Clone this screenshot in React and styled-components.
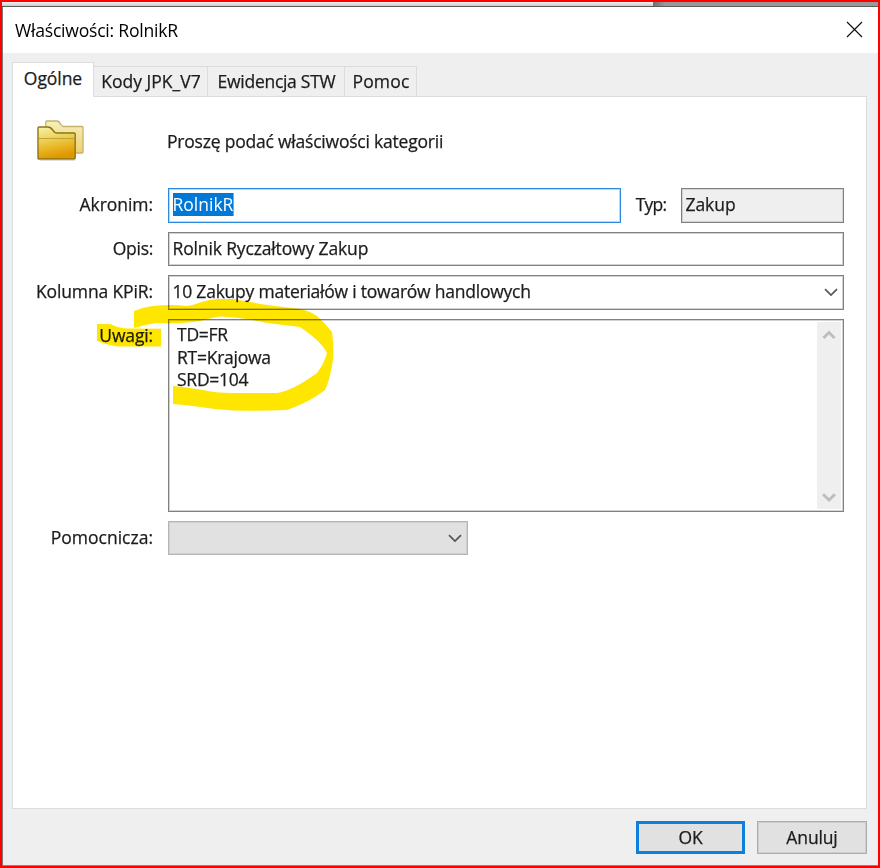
import React from "react";
import styled, { createGlobalStyle } from "styled-components";

const GlobalStyle = createGlobalStyle`
* {
box-sizing: border-box;
}
body {
margin: 0;
overflow: hidden;
font-family: "Open Sans", "Noto Sans", sans-serif;
font-stretch: 92%;
}
`

const Frame = styled.div`
width: 880px;
height: 868px;
border: 2px solid #ff0000;
background-color: #efefef;
position: relative;
display: flex;
flex-direction: column;
`

const Backdrop = styled.div`
height: 5px;
flex: none;
border-bottom: 1px solid #5c5c5c;
display: flex;
`

const BackdropPart = styled.div`
width: ${({ width }) => width || "auto"};
flex: ${({ width }) => width ? "none" : "1"};
background: ${({ bg }) => bg};
`

const DialogWindow = styled.div`
flex: 1;
display: flex;
flex-direction: column;
border-left: 1px solid #777;
border-bottom: 1px solid #888;
`

const TitleBar = styled.div`
height: 46px;
flex: none;
background-color: #fff;
display: flex;
align-items: center;
justify-content: space-between;
padding: 0 15px 0 12px;
`

const CloseBox = styled.div`
height: 19px;
display: flex;
align-items: flex-start;
`

const Txt = styled.span`
font-size: ${({ size }) => size || "17.5px"};
line-height: ${({ leading }) => leading || "23px"};
letter-spacing: ${({ spacing }) => spacing || "-0.14px"};
color: ${({ color }) => color || "#1c1c1c"};
-webkit-text-stroke: ${({ stroke }) => stroke || "0.25px"};
white-space: pre;
`

const TabBar = styled.div`
height: 43px;
flex: none;
display: flex;
align-items: flex-end;
padding-left: 9px;
`

const Tab = styled.div`
width: ${({ width }) => width};
height: ${({ active }) => active ? "35px" : "30px"};
margin-bottom: ${({ active }) => active ? "-1px" : "0"};
padding: ${({ active }) => active ? "0 0 4px" : "0 0 1px 1px"};
border: 1px solid #dcdcdc;
border-bottom: none;
border-left-width: ${({ active }) => active ? "1px" : "0"};
background-color: ${({ active }) => active ? "#fff" : "#efefef"};
position: relative;
z-index: ${({ active }) => active ? 1 : 0};
display: flex;
align-items: center;
justify-content: center;
`

const Panel = styled.div`
width: 855px;
height: 713px;
flex: none;
margin-left: 9px;
padding: 23px 22px 0 0;
border: 1px solid #dcdcdc;
background-color: #fff;
`

const Heading = styled.div`
height: 68px;
display: flex;
align-items: flex-start;
padding-left: 24px;
gap: 83px;
`

const HeadingText = styled.div`
padding-top: 10px;
`

const Row = styled.div`
display: grid;
grid-template-columns: 140px 1fr;
column-gap: 15px;
margin-bottom: 9px;
`

const Label = styled.div`
text-align: right;
padding-top: 5px;
white-space: nowrap;
`

const Fields = styled.div`
display: flex;
align-items: flex-start;
justify-content: space-between;
`

const Field = styled.div`
width: ${({ width }) => width || "676px"};
height: ${({ height }) => height || "34.6px"};
border: 1px solid ${({ line }) => line || "#808080"};
box-shadow: inset 0 0 0 1px ${({ glow }) => glow || "#d2d2d2"};
background-color: ${({ bg }) => bg || "#fff"};
padding: 0 5px 1px 3.5px;
display: flex;
align-items: center;
justify-content: space-between;
`

const Selected = styled.div`
height: 23px;
margin-bottom: 1px;
border-right: 1px solid #ff8728;
background-color: #0078d7;
display: flex;
align-items: center;
`

const Notes = styled.div`
width: 676px;
height: 193px;
border: 1px solid #808080;
box-shadow: inset 0 0 0 1px #d2d2d2;
padding: 2px;
display: flex;
justify-content: space-between;
`

const NotesLines = styled.div`
padding: 1px 0 0 6px;
display: flex;
flex-direction: column;
`

const ScrollBar = styled.div`
width: 24px;
background-color: #efefef;
display: flex;
flex-direction: column;
justify-content: space-between;
align-items: center;
padding: 8px 1px 7px 0;
`

const Footer = styled.div`
display: flex;
justify-content: flex-end;
gap: 12px;
padding: 12px 11px 0 0;
`

const Button = styled.button`
width: ${({ primary }) => primary ? "109px" : "110px"};
height: 33px;
padding: 0;
font-family: inherit;
font-stretch: inherit;
background-color: #e1e1e1;
border: ${({ primary }) => primary ? "3px solid #0f7fdb" : "1px solid #adadad"};
box-shadow: ${({ primary }) => primary ? "none" : "inset 0 0 0 1px #cdcdcd"};
display: flex;
align-items: center;
justify-content: center;
`

// highlighter strokes lie over the form
const Marker = styled.svg`
position: absolute;
left: 88px;
top: 288px;
mix-blend-mode: multiply;
pointer-events: none;
`

const tabs = [
    { name: "Ogólne", width: "82px", active: true, spacing: "-0.05px" },
    { name: "Kody JPK_V7", width: "114px", spacing: "0" },
    { name: "Ewidencja STW", width: "137px", spacing: "-0.28px" },
    { name: "Pomoc", width: "72px", spacing: "0.2px" },
]

const notes = ["TD=FR", "RT=Krajowa", "SRD=104"]

const Chevron = ({ up, color = "#555", weight = 1.7 }) => (
    <svg width="14" height="10" viewBox="0 0 14 10">
        <path d={up ? "M1.5 8L7 2.5L12.5 8" : "M1 2.2L7 8L13 2.2"} fill="none" stroke={color} strokeWidth={weight} />
    </svg>
)

const CloseIcon = () => (
    <svg width="17" height="17" viewBox="0 0 17 17">
        <path d="M1 1L16 16M16 1L1 16" stroke="#111" strokeWidth="1.2" />
    </svg>
)

const FolderIcon = () => (
    <svg width="47" height="41" viewBox="0 0 48 41" preserveAspectRatio="none">
        <defs>
            <linearGradient id="back" x1="0" y1="0" x2="0" y2="1">
                <stop offset="0" stopColor="#f5f0bb" />
                <stop offset="1" stopColor="#efd071" />
            </linearGradient>
            <linearGradient id="front" x1="0" y1="0" x2="0.25" y2="1">
                <stop offset="0" stopColor="#f8f2aa" />
                <stop offset="0.35" stopColor="#eed867" />
                <stop offset="0.7" stopColor="#e8b625" />
                <stop offset="1" stopColor="#df9700" />
            </linearGradient>
        </defs>
        <path d="M9 33V2Q9 1 10 1H20Q23 1 24 4Q25 6 27 6.5H46Q47 6.5 47 7.5V32Q47 33 46 33Z" fill="url(#back)" stroke="#c6b36a" strokeWidth="1.3" />
        <path d="M1 38V8Q1 7 2 7H11Q14 7 16 10Q18 13 20 13H38Q39 13 39 14V38Q39 39 38 39H2Q1 39 1 38Z" fill="url(#front)" stroke="#8c7414" strokeWidth="1.4" />
        <path d="M2 18.5H38" stroke="#c2a230" strokeWidth="1.1" />
        <path d="M3 40.3H39" stroke="#ccc" strokeWidth="0.8" />
    </svg>
)

const App = () => {
    return (
        <>
            <GlobalStyle />
            <Frame>
                <Backdrop>
                    <BackdropPart width="651px" bg="linear-gradient(#f4f4f4, #c9c9c9)" />
                    <BackdropPart bg="linear-gradient(90deg, #707070, #999 12px)" />
                </Backdrop>
                <DialogWindow>
                    <TitleBar>
                        <Txt size="17.6px" color="#000" spacing="-0.24px" leading="26px" stroke="0">Właściwości: RolnikR</Txt>
                        <CloseBox><CloseIcon /></CloseBox>
                    </TitleBar>
                    <TabBar>
                        {tabs.map(el => (
                            <Tab key={el.name} width={el.width} active={el.active}>
                                <Txt spacing={el.spacing}>{el.name}</Txt>
                            </Tab>
                        ))}
                    </TabBar>
                    <Panel>
                        <Heading>
                            <FolderIcon />
                            <HeadingText><Txt spacing="-0.21px">Proszę podać właściwości kategorii</Txt></HeadingText>
                        </Heading>
                        <Row>
                            <Label><Txt spacing="-0.05px">Akronim:</Txt></Label>
                            <Fields>
                                <Field width="453px" line="#2b8be0" glow="#b5d8f6">
                                    <Selected><Txt color="#fff" spacing="0" stroke="0">RolnikR</Txt></Selected>
                                </Field>
                                <Label><Txt spacing="-0.8px">Typ:</Txt></Label>
                                <Field width="163px" bg="#efefef"><Txt spacing="-0.05px">Zakup</Txt></Field>
                            </Fields>
                        </Row>
                        <Row>
                            <Label><Txt spacing="-0.3px">Opis:</Txt></Label>
                            <Field><Txt>Rolnik Ryczałtowy Zakup</Txt></Field>
                        </Row>
                        <Row>
                            <Label><Txt spacing="-0.12px">Kolumna KPiR:</Txt></Label>
                            <Field>
                                <Txt spacing="-0.23px">10 Zakupy materiałów i towarów handlowych</Txt>
                                <Chevron />
                            </Field>
                        </Row>
                        <Row>
                            <Label><Txt>Uwagi:</Txt></Label>
                            <Notes>
                                <NotesLines>
                                    {notes.map(el => <Txt key={el} spacing="-0.25px" leading="22.8px">{el}</Txt>)}
                                </NotesLines>
                                <ScrollBar>
                                    <Chevron up color="#bdbdbd" weight={2.8} />
                                    <Chevron color="#bdbdbd" weight={2.8} />
                                </ScrollBar>
                            </Notes>
                        </Row>
                        <Row>
                            <Label><Txt spacing="0">Pomocnicza:</Txt></Label>
                            <Field width="300px" bg="#e1e1e1" line="#b5b5b5" glow="#d0d0d0">
                                <span />
                                <Chevron />
                            </Field>
                        </Row>
                    </Panel>
                    <Footer>
                        <Button primary><Txt>OK</Txt></Button>
                        <Button><Txt>Anuluj</Txt></Button>
                    </Footer>
                </DialogWindow>
                <Marker width="260" height="130" viewBox="90 290 260 130">
                    <path fill="#ffe600" d="M134 311Q143 307 153 306Q172 304 187 306Q194 305 200 302.5Q208 299.500 217 299H233Q250 302 267 305L300 309Q310 311 317 316Q326 324 332 332Q334 346 333 360Q330 380 325 390Q310 402 287 410Q260 411 233 410.500Q214 409 200 407Q187 405 173 404V386Q187 387 200 389.500Q216 393 233 393H277Q292 391 317 373Q324 364 327 353Q322 342 300 327Q284 325 267 323Q240 317 220 316.500Q210 318 200 321Q182 324 157 323Q148 324 134 328Z" />
                    <path fill="#ffe600" d="M97 324H110Q118 328 127 328.500L161 328.700V346.500H117Q106 345 97 341Z" />
                </Marker>
            </Frame>
        </>
    )
};

export default App;
